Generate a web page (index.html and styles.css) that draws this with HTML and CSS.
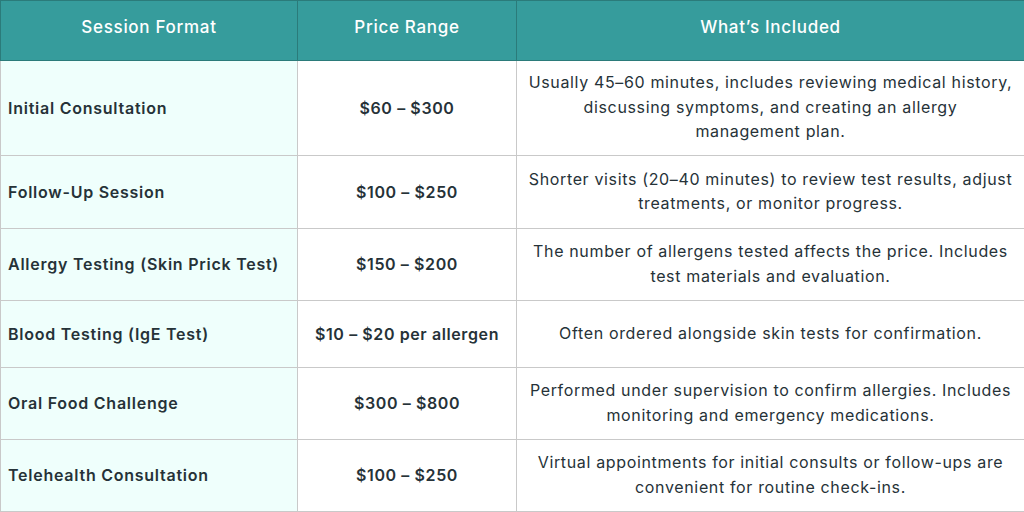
FILE: index.html
```html
<!DOCTYPE html>
<html>
<head>
<meta charset="utf-8">
<link rel="stylesheet" href="styles.css">
</head>
<body>
<table class="pricing">
  <colgroup>
    <col class="c1"><col class="c2"><col class="c3">
  </colgroup>
  <thead>
    <tr class="head">
      <th>Session Format</th>
      <th>Price Range</th>
      <th>What’s Included</th>
    </tr>
  </thead>
  <tbody>
    <tr class="r1">
      <td class="name">Initial Consultation</td>
      <td class="price">$60 – $300</td>
      <td class="desc">Usually 45–60 minutes, includes reviewing medical history, discussing symptoms, and creating an allergy<br>management plan.</td>
    </tr>
    <tr class="r2">
      <td class="name">Follow-Up Session</td>
      <td class="price">$100 – $250</td>
      <td class="desc">Shorter visits (20–40 minutes) to review test results, adjust treatments, or monitor progress.</td>
    </tr>
    <tr class="r3">
      <td class="name">Allergy Testing (Skin Prick Test)</td>
      <td class="price">$150 – $200</td>
      <td class="desc">The number of allergens tested affects the price. Includes test materials and evaluation.</td>
    </tr>
    <tr class="r4">
      <td class="name">Blood Testing (IgE Test)</td>
      <td class="price">$10 – $20 per allergen</td>
      <td class="desc">Often ordered alongside skin tests for confirmation.</td>
    </tr>
    <tr class="r5">
      <td class="name">Oral Food Challenge</td>
      <td class="price">$300 – $800</td>
      <td class="desc">Performed under supervision to confirm allergies. Includes monitoring and emergency medications.</td>
    </tr>
    <tr class="r6">
      <td class="name">Telehealth Consultation</td>
      <td class="price">$100 – $250</td>
      <td class="desc">Virtual appointments for initial consults or follow-ups are convenient for routine check-ins.</td>
    </tr>
  </tbody>
</table>
</body>
</html>
```
FILE: styles.css
```css
html, body {
  margin: 0;
  padding: 0;
  background: #ffffff;
}
.pricing {
  width: 1024px;
  table-layout: fixed;
  border-collapse: collapse;
  font-family: "Inter", "Noto Sans", sans-serif;
  font-size: 16px;
  line-height: 24.5px;
  letter-spacing: 0.65px;
  color: #263238;
}
.c1 { width: 297px; }
.c2 { width: 219px; }
.c3 { width: 508px; }
.head th {
  background: #369c9c;
  color: #ffffff;
  font-size: 17px;
  font-weight: 500;
  letter-spacing: 0.7px;
  text-align: center;
  border: 1px solid #2b7b7a;
  padding: 0 8px 6px;
}
td {
  border: 1px solid #c9c9c9;
  padding: 0 8px;
  vertical-align: middle;
}
.name {
  background: #effffc;
  font-weight: 600;
  letter-spacing: 0.75px;
  text-align: left;
  padding-left: 7px;
}
.price {
  text-align: center;
  font-weight: 600;
  letter-spacing: 0.6px;
}
.desc {
  text-align: center;
  padding: 0 8px 2px;
}
.head { height: 60px; }
.r1 { height: 95px; }
.r2 { height: 73px; }
.r3 { height: 72px; }
.r4 { height: 67px; }
.r5 { height: 72px; }
.r6 { height: 72px; }
```
